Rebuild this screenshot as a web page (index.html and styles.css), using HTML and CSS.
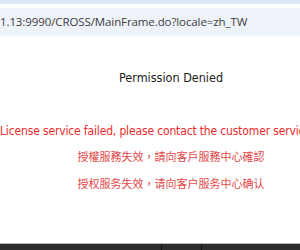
FILE: index.html
```html
<!DOCTYPE html>
<html lang="zh-TW">
<head>
    <meta charset="UTF-8">
    <title>Permission Denied</title>
    <link rel="stylesheet" href="styles.css">
</head>
<body>
    <div class="tabstrip"></div>
    <div class="address-bar">
        <span class="url">1.13:9990/CROSS/MainFrame.do?locale=zh_TW</span>
    </div>

    <div class="page">
        <div class="content">
            <h1 class="title">Permission Denied</h1>
            <p class="error-en">License service failed, please contact the customer service center.</p>
            <p class="error-zh">授權服務失效，請向客戶服務中心確認</p>
            <p class="error-zh">授权服务失效，请向客户服务中心确认</p>
        </div>
    </div>

    <div class="taskbar">
        <div class="task wide"></div>
        <div class="task small"></div>
        <div class="task rest"></div>
    </div>
</body>
</html>
```

FILE: styles.css
```css
* {
    box-sizing: border-box;
}

html,
body {
    margin: 0;
    height: 250px;
    overflow: hidden;
    background: #fff;
}

body {
    display: flex;
    flex-direction: column;
    width: 300px;
}

.tabstrip {
    height: 4px;
    background: #dbe6f7;
    margin-bottom: 4px;
}

.address-bar {
    height: 27px;
    background: #eef2f9;
    display: flex;
    align-items: center;
    white-space: nowrap;
    overflow: hidden;
}

.url {
    font-family: "Open Sans", "Noto Sans", sans-serif;
    font-size: 11.5px;
    color: #3c3c3c;
    letter-spacing: -0.1px;
    margin-top: -1px;
}

.page {
    flex: 1;
    overflow: hidden;
    border-top: 2px solid #f6f7f9;
}

.content {
    width: 342px;
    text-align: center;
    padding-top: 32px;
}

.title {
    margin: 0;
    font-family: "Comic Sans MS", "DejaVu Sans Condensed", sans-serif;
    font-weight: normal;
    font-size: 12.5px;
    line-height: 18px;
    color: #222;
}

.error-en {
    margin: 36px 0 0;
    white-space: nowrap;
    font-family: "Comic Sans MS", "DejaVu Sans Condensed", sans-serif;
    font-size: 12px;
    letter-spacing: -0.15px;
    line-height: 16px;
    color: #ee2a2a;
}

.error-zh {
    margin: 9px 0 0;
    font-family: "Noto Sans CJK TC", "Noto Sans CJK SC", sans-serif;
    font-size: 11px;
    line-height: 17px;
    color: #e24848;
}

.error-zh + .error-zh {
    margin-top: 10px;
}

.taskbar {
    height: 7px;
    display: flex;
    background: #2d2d2d;
    border-top: 1px solid #b9b9b9;
}

.task {
    height: 100%;
}

.wide {
    width: 162px;
    border-right: 1px solid #111;
}

.small {
    width: 40px;
    border-right: 1px solid #111;
}

.rest {
    flex: 1;
}
```
